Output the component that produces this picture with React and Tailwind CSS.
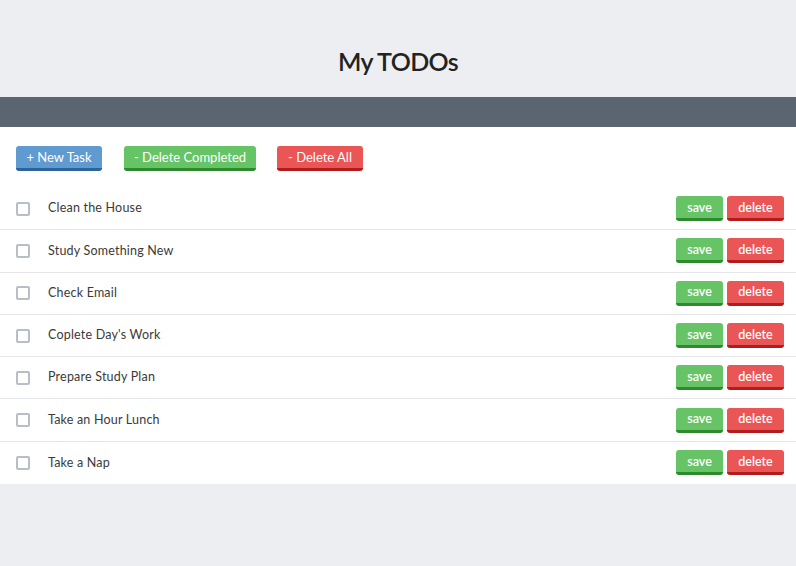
const tasks = [
  "Clean the House",
  "Study Something New",
  "Check Email",
  "Coplete Day's Work",
  "Prepare Study Plan",
  "Take an Hour Lunch",
  "Take a Nap"
];

export default function App() {
  return (
    <div className="min-h-[566px] bg-[#eceef1] font-['Lato',_'Open_Sans',_sans-serif] text-[#333]">
      <header className="flex h-[97px] items-center justify-center pt-[26px]">
        <h1 className="text-[25px] font-semibold tracking-tight text-[#222]">My TODOs</h1>
      </header>
      <div className="h-[30px] bg-[#5a6571]" />
      <main className="bg-white">
        <div className="flex items-center px-4 pt-[19px] pb-[17px]">
          <button className="h-[25px] w-[86px] rounded-[3px] border-b-[3px] border-[#2c6399] bg-[#5f9ad0] pt-[2px] text-[13px] text-white">
            + New Task
          </button>
          <button className="ml-[22px] h-[25px] w-[132px] rounded-[3px] border-b-[3px] border-[#2d8a2d] bg-[#66c466] pt-[2px] text-[13px] text-white">
            - Delete Completed
          </button>
          <button className="ml-[21px] h-[25px] w-[86px] rounded-[3px] border-b-[3px] border-[#b21c1c] bg-[#ea5556] pt-[2px] text-[13px] text-white">
            - Delete All
          </button>
        </div>
        <ul>
          {tasks.map((task, index) => (
            <li
              key={task}
              className={`flex h-[42.3px] items-center pl-4 pr-[12px] ${index < tasks.length - 1 ? "border-b border-[#e4e6e9]" : ""}`}
            >
              <span className="h-[14px] w-[14px] rounded-[2px] border-2 border-[#b7bec6] bg-white" />
              <span className="ml-[18px] flex-1 text-[12.5px] tracking-[0.2px] text-[#3a3a3a]">{task}</span>
              <button className="h-[25px] w-[47px] rounded-[3px] border-b-[3px] border-[#2d8a2d] bg-[#66c466] pt-[2px] text-[12.5px] font-semibold text-white">
                save
              </button>
              <button className="ml-[4px] h-[25px] w-[57px] rounded-[3px] border-b-[3px] border-[#b21c1c] bg-[#ea5556] pt-[2px] text-[12.5px] font-semibold text-white">
                delete
              </button>
            </li>
          ))}
        </ul>
      </main>
    </div>
  );
}
